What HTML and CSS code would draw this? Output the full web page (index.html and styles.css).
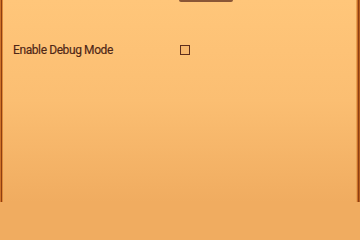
FILE: index.html
```html
<!DOCTYPE html>
<html>
<head>
<meta charset="utf-8">
<link rel="stylesheet" href="styles.css">
</head>
<body>
<div class="panel">
  <div class="top">
    <div class="btn-edge"></div>
  </div>
  <div class="row">
    <span class="label">Enable Debug Mode</span>
    <span class="checkbox"></span>
  </div>
</div>
</body>
</html>
```

FILE: styles.css
```css
html, body {
  margin: 0;
  padding: 0;
  width: 360px;
  height: 202px;
  overflow: hidden;
  background: #f0ac60;
}
.panel {
  box-sizing: border-box;
  width: 360px;
  height: 202px;
  background: linear-gradient(to bottom, #ffc67a 0%, #fbbe72 50%, #f0ac60 100%);
  box-shadow:
    inset 1px 0 0 #d0742a,
    inset 2px 0 0 #8e3e12,
    inset 3px 0 0 #de8838,
    inset -1px 0 0 #b8601e,
    inset -2px 0 0 #8e3e12,
    inset -3px 0 0 #c86e28,
    inset -4px 0 0 #e8a050;
  display: flex;
  flex-direction: column;
  font-family: "Roboto", "Liberation Sans", sans-serif;
}
.top {
  height: 2px;
  padding-left: 179px;
}
.btn-edge {
  width: 54px;
  height: 2px;
  background: #8a5636;
  border-radius: 0 0 2px 2px;
}
.row {
  display: flex;
  align-items: center;
  margin-top: 41px;
  padding-left: 13px;
  height: 14px;
}
.label {
  width: 167px;
  font-size: 12px;
  color: #4e2616;
  letter-spacing: -0.4px;
  -webkit-text-stroke: 0.15px #4e2616;
}
.checkbox {
  box-sizing: border-box;
  width: 10px;
  height: 10px;
  border: 1.5px solid #5e2e1c;
  background: #f7b86c;
}
```
